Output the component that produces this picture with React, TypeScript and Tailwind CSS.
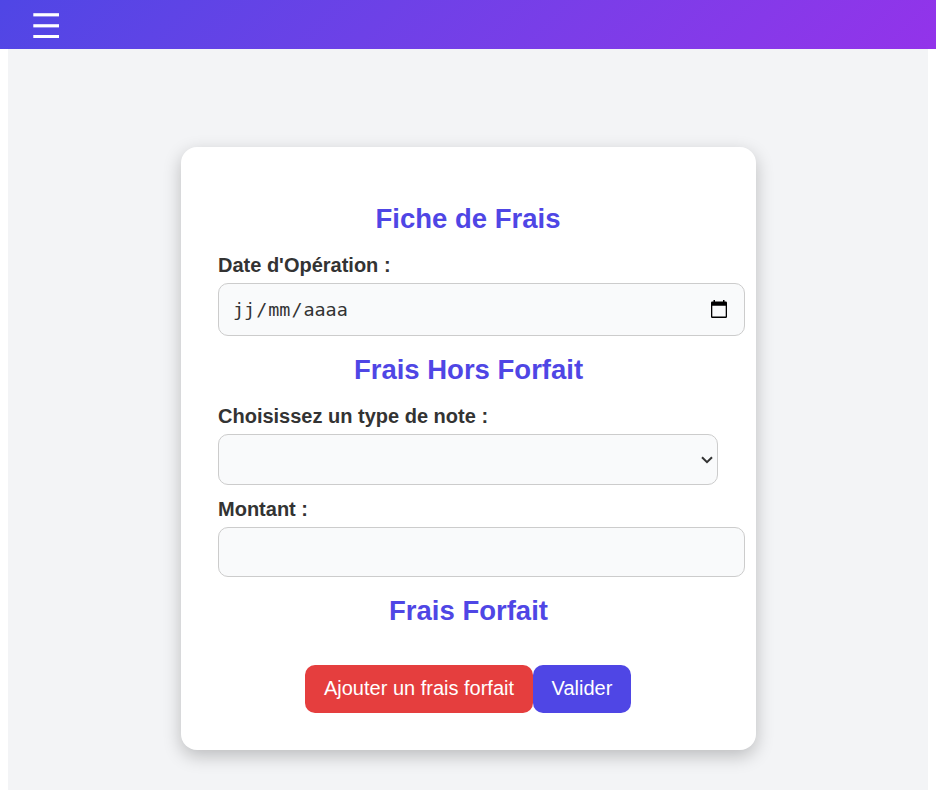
import React from "react";

const heading = "text-center text-[27.5px] leading-[32px] font-bold text-[#4f46e5]";
const label = "block text-[20px] leading-[23px] font-bold text-[#333333]";
const field = "rounded-[10px] border border-[#cccccc] bg-[#f9fafb]";

export default function App() {
  return (
    <div className="flex h-[790px] w-[936px] flex-col overflow-hidden bg-white font-['Liberation_Sans',Arial,sans-serif]">
      <header className="flex h-[49px] shrink-0 items-start bg-linear-135 from-[#4f46e5] to-[#9333ea] pt-[13px] pl-[33px]">
        <svg width="26" height="25" viewBox="0 0 26 25" fill="#fff">
          <rect x="0.3" y="0.2" width="25.7" height="3.2" />
          <rect x="0.3" y="11.2" width="25.7" height="3.2" />
          <rect x="0.3" y="22" width="25.7" height="3" />
        </svg>
      </header>
      <main className="mx-2 flex-1 bg-[#f3f4f6] pt-[98px]">
        <form className="ml-[173px] h-[603px] w-[575px] rounded-[16px] bg-white px-[37px] pt-[56px] shadow-[0_6px_18px_rgba(0,0,0,0.23)]">
          <h2 className={`${heading} -ml-px`}>Fiche de Frais</h2>
          <label className={`${label} mt-[19px]`}>Date d'Opération :</label>
          <div className={`${field} mt-[6px] flex h-[53px] w-[527px] items-center justify-between pr-[16px] pl-[13px]`}>
            <div className="flex pt-px font-['DejaVu_Sans_Mono',monospace] text-[18.4px] text-[#333333]">
              <span className="px-px">jj</span>
              <span>/</span>
              <span className="px-px">mm</span>
              <span>/</span>
              <span className="px-px">aaaa</span>
            </div>
            <svg width="18" height="20" viewBox="0 0 18 20" fill="#000" className="mb-[2px]">
              <path fillRule="evenodd" d="M3.5 1h1.500v1.5h8V1h1.500v1.5h1.2q1.3 0 1.3 1.3v13.900q0 1.3-1.3 1.3H2.3Q1 19 1 17.700V3.800Q1 2.500 2.300 2.500h1.200zM2.300 6.800v10.700h13.400V6.800z" />
            </svg>
          </div>
          <h2 className={`${heading} mt-[18px]`}>Frais Hors Forfait</h2>
          <label className={`${label} mt-[19px]`}>Choisissez un type de note :</label>
          <div className={`${field} mt-[6px] flex h-[51px] w-[500px] items-center justify-end pr-[4px]`}>
            <svg width="12" height="8" viewBox="0 0 12 8" fill="none" stroke="#333" strokeWidth="2">
              <path d="M1 1.200l5 5 5-5" />
            </svg>
          </div>
          <label className={`${label} mt-[13px]`}>Montant :</label>
          <div className={`${field} mt-[6px] h-[50px] w-[527px]`} />
          <h2 className={`${heading} mt-[18px]`}>Frais Forfait</h2>
          <div className="mt-[38px] flex w-[500px] justify-center text-[20px] text-white">
            <button type="button" className="h-[48px] w-[228px] rounded-[10px] bg-[#e53e3e] pb-[2px]">Ajouter un frais forfait</button>
            <button type="button" className="h-[48px] w-[98px] rounded-[10px] bg-[#4f46e5] pb-[2px]">Valider</button>
          </div>
        </form>
      </main>
    </div>
  );
}
